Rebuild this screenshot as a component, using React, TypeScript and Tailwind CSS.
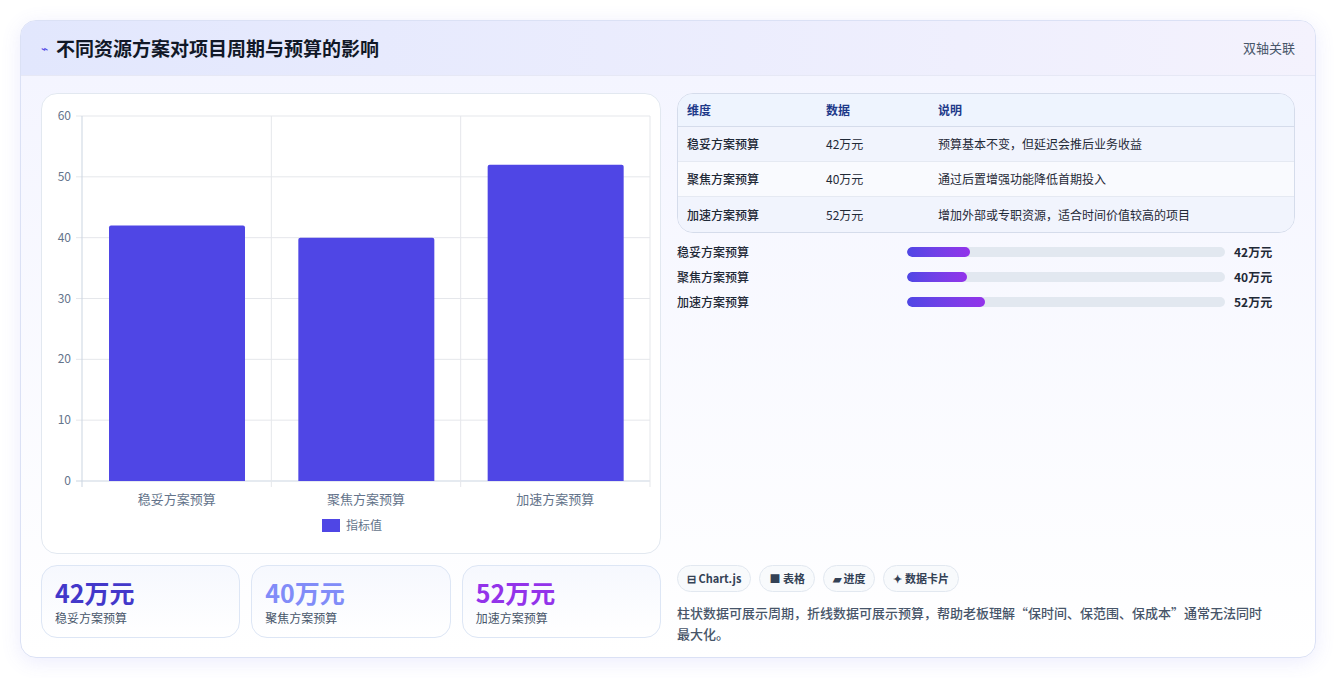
import React from "react";

const F = { fontFamily: '"Noto Sans CJK SC", "Noto Sans", sans-serif' };
const rows = [
  { n: "稳妥方案预算", v: 42, d: "预算基本不变，但延迟会推后业务收益" },
  { n: "聚焦方案预算", v: 40, d: "通过后置增强功能降低首期投入" },
  { n: "加速方案预算", v: 52, d: "增加外部或专职资源，适合时间价值较高的项目" },
];

function Chart() {
  const W = 620, H = 461;
  const x0 = 40, x1 = 608, y0 = 387, yTop = 22;
  const step = (y0 - yTop) / 6;
  const cw = (x1 - x0) / 3;
  return (
    <svg width={W} height={H} className="block">
      {[0, 1, 2, 3, 4, 5, 6].map((i) => {
        const y = y0 - i * step;
        return (
          <g key={i}>
            <line x1={x0 - 6} x2={x1} y1={y} y2={y} stroke={i === 0 ? "#cbd5e1" : "#e5e7eb"} />
            <text x={x0 - 11} y={y + 4} textAnchor="end" fontSize="12" fill="#64748b" style={F}>{i * 10}</text>
          </g>
        );
      })}
      {[0, 1, 2, 3].map((i) => (
        <line key={i} x1={x0 + i * cw} x2={x0 + i * cw} y1={yTop} y2={y0 + 6} stroke={i === 0 ? "#cbd5e1" : "#e5e7eb"} />
      ))}
      {rows.map((r, i) => {
        const h = r.v * step / 10;
        const bx = x0 + i * cw + 27;
        return (
          <g key={i}>
            <path d={`M${bx} ${y0}V${y0 - h + 2}q0-2 2-2h132q2 0 2 2V${y0}Z`} fill="#4f46e5" />
            <text x={x0 + i * cw + cw / 2} y={y0 + 23} textAnchor="middle" fontSize="13" fill="#64748b" style={F}>{r.n}</text>
          </g>
        );
      })}
      <rect x={280} y={425} width={18} height={13} fill="#4f46e5" />
      <text x={304} y={436} fontSize="12" fill="#64748b" style={F}>指标值</text>
    </svg>
  );
}

export default function App() {
  const colors = ["text-[#4338ca]", "text-[#818cf8]", "text-[#9333ea]"];
  return (
    <div className="w-[1336px] h-[678px] bg-white p-5" style={F}>
      <div className="h-[638px] rounded-2xl border border-[#dbe1f5] bg-gradient-to-b from-[#f3f4ff] to-white shadow-[0_4px_20px_rgba(99,102,241,0.12)] overflow-hidden">
        <div className="h-[55px] flex items-center justify-between px-5 bg-gradient-to-r from-[#e2e7fd] to-[#f4f2fd] border-b border-[#e6e8f5]">
          <div className="flex items-center gap-2">
            <span className="text-[#4f46e5] text-xs">⌁</span>
            <span className="text-[19px] font-bold text-[#111827]">不同资源方案对项目周期与预算的影响</span>
          </div>
          <span className="text-[13px] text-[#475569]">双轴关联</span>
        </div>
        <div className="flex gap-4 px-5 pt-[17px]">
          <div className="w-[620px] flex flex-col gap-[11px]">
            <div className="h-[461px] rounded-2xl border border-[#e2e8f0] bg-white overflow-hidden"><Chart /></div>
            <div className="grid grid-cols-3 gap-[11px]">
              {rows.map((r, i) => (
                <div key={i} className="h-[73px] rounded-2xl border border-[#dde6f5] bg-gradient-to-b from-[#f6f8fe] to-white px-[13px] pt-[10px]">
                  <div className={`text-[25px] leading-[32px] font-bold ${colors[i]}`}>{r.v}万元</div>
                  <div className="text-[12px] text-[#475569] mt-[1px]">{r.n}</div>
                </div>
              ))}
            </div>
          </div>
          <div className="w-[620px] flex flex-col">
            <div className="rounded-2xl border border-[#d5dceb] overflow-hidden text-[12px]">
              <div className="flex h-[33px] items-center bg-[#eef4fe] border-b border-[#d5dceb] text-[#1e3a8a] font-semibold">
                <div className="w-[148px] pl-[9px]">维度</div><div className="w-[112px]">数据</div><div>说明</div>
              </div>
              {rows.map((r, i) => (
                <div key={i} className={`flex h-[35px] items-center text-[#1f2937] ${i < 2 ? "border-b border-[#e5e9f2]" : ""} ${i === 1 ? "bg-[#f9fafe]" : "bg-[#f1f4fd]"}`}>
                  <div className="w-[148px] pl-[9px] font-medium">{r.n}</div><div className="w-[112px]">{r.v}万元</div><div>{r.d}</div>
                </div>
              ))}
            </div>
            <div className="flex flex-col gap-[7px] mt-[10px]">
              {rows.map((r, i) => (
                <div key={i} className="flex items-center h-[18px] text-[12px]">
                  <div className="w-[230px] text-[#1f2937] font-medium">{r.n}</div>
                  <div className="w-[318px] h-[10px] rounded-full bg-[#e2e8f0] overflow-hidden">
                    <div className="h-full rounded-full bg-gradient-to-r from-[#4f46e5] to-[#9333ea]" style={{ width: `${r.v * 1.5 / 318 * 100}%` }} />
                  </div>
                  <div className="ml-[9px] font-bold text-[#1f2937]">{r.v}万元</div>
                </div>
              ))}
            </div>
            <div className="flex-1" />
            <div className="flex gap-2 mt-auto" style={{ marginTop: 254 }}>
              {["⊟ Chart.js", "■ 表格", "▰ 进度", "✦ 数据卡片"].map((c) => (
                <span key={c} className="h-[27px] px-[9px] rounded-full border border-[#e2e8f0] bg-[#f8fafc] text-[11px] font-semibold text-[#334155] flex items-center">{c}</span>
              ))}
            </div>
            <p className="mt-[10px] text-[13px] leading-[21px] font-medium text-[#475569] pr-6">柱状数据可展示周期，折线数据可展示预算，帮助老板理解“保时间、保范围、保成本”通常无法同时最大化。</p>
          </div>
        </div>
      </div>
    </div>
  );
}
